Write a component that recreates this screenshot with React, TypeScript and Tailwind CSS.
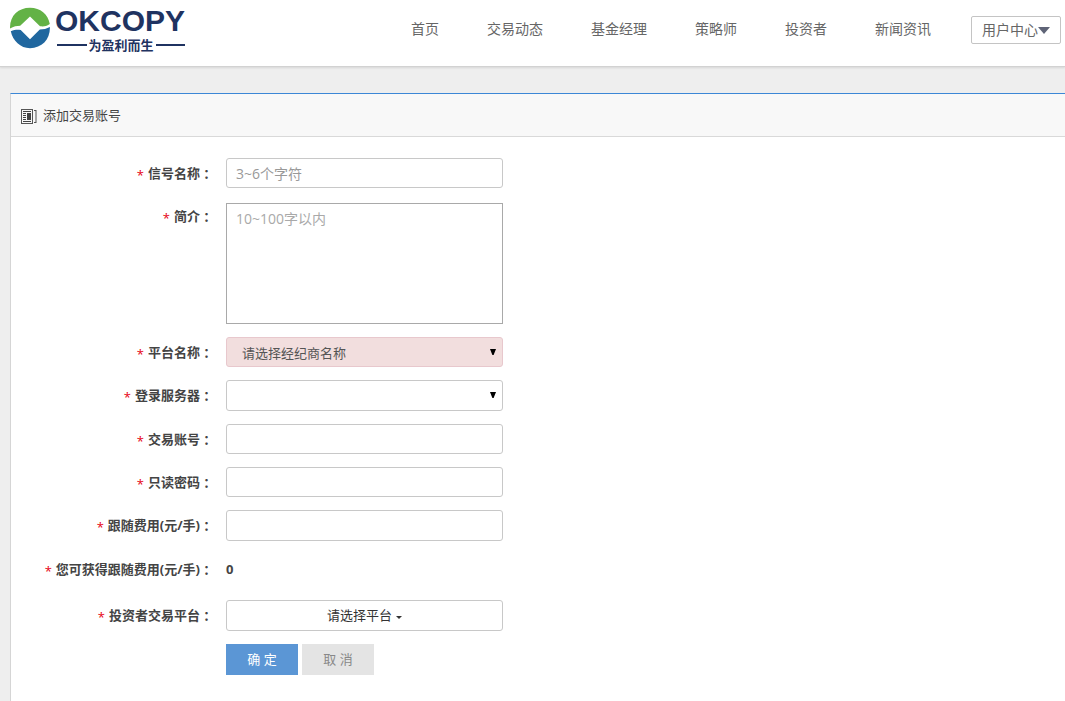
import React, { useState } from 'react';

const navItems = ['首页', '交易动态', '基金经理', '策略师', '投资者', '新闻资讯'];

const inputClass =
  'block w-full px-[9px] border border-[#c8c8c8] rounded-[3px] bg-white text-sm text-[#444] placeholder:text-[#999] focus:outline-none focus:border-[#5b96d5]';

const Logo = () => (
  <a href="#" className="flex items-start gap-[5px]">
    <svg width="40" height="42" viewBox="0 0 40 42" className="mt-[7px]" aria-hidden="true">
      <path d="M0 21.500C-.3 9 8 .8 20 .8c10.500 0 18 6.500 19.800 16.200-3.800 2.300-5.800 2.700-9.800 2.300L20 9.500l-9.800 9.300C7 18.800 3.500 19.500 0 21.500z" fill="#63b246" />
      <path d="M.8 24.300c3.700-1.500 6.200-1.800 9.900-1.300L20 32.300l9.800-9.800c3.600 0 6.900-.8 10.100-2.500C40.300 32.500 32 41.200 20 41.200 10.500 41.200 2.800 34 .8 24.300z" fill="#20679f" />
    </svg>
    <span className="flex flex-col pt-[5px] text-[#1f3361]">
      <span className="font-['Liberation_Sans',sans-serif] text-[30px] leading-8 font-bold">OKCOPY</span>
      <span className="flex items-center gap-[2px] pl-[2px] text-[13px] leading-4 font-bold">
        <span className="h-[2px] flex-1 bg-[#1f3361]" />
        为盈利而生
        <span className="h-[2px] flex-1 bg-[#1f3361]" />
      </span>
    </span>
  </a>
);

const Row = ({ label, htmlFor, children }: { label?: string; htmlFor?: string; children: React.ReactNode }) => (
  <div className="flex items-start gap-[13px]">
    <div className="w-[202px] shrink-0">
      {label && (
        <label htmlFor={htmlFor} className="flex h-[30px] items-center justify-end pt-[2px] text-[13px] font-bold text-[#444]">
          <span className="mr-1 pt-1 font-normal text-[#e60012]">*</span>
          {label}
          <span className="font-['Noto_Sans_CJK_TC',sans-serif]">：</span>
        </label>
      )}
    </div>
    <div className="w-[277px]">{children}</div>
  </div>
);

const SelectArrow = () => (
  <svg width="6" height="6" viewBox="0 0 6 6" className="pointer-events-none absolute right-[7px] top-3" aria-hidden="true">
    <path d="M0 0h6L3.600 6H2.400z" fill="#000" />
  </svg>
);

const App = () => {
  const [formData, setFormData] = useState({
    name: '',
    intro: '',
    broker: '',
    server: '',
    account: '',
    password: '',
    fee: ''
  });

  const handleChange = (e: React.ChangeEvent<HTMLInputElement | HTMLSelectElement | HTMLTextAreaElement>) => {
    setFormData({
      ...formData,
      [e.target.name]: e.target.value
    });
  };

  return (
    <div className="min-h-screen flex flex-col overflow-x-hidden bg-[#eee] font-['Open_Sans','Noto_Sans_CJK_SC',sans-serif]">
      {/* Header */}
      <header className="flex h-[67px] shrink-0 items-start justify-between border-b border-[#d2d2d2] bg-white pl-[10px] pr-1 shadow-[0_1px_2px_rgba(0,0,0,0.1)]">
        <Logo />
        <div className="flex items-start gap-10 pt-4">
          <nav className="flex gap-12 text-sm text-[#666]">
            {navItems.map((item) => (
              <a key={item} href="#" className="leading-[26px] hover:text-[#5b96d5]">
                {item}
              </a>
            ))}
          </nav>
          <button type="button" className="flex h-7 w-[90px] items-center justify-center rounded-[2px] border border-[#c4c4c4] text-sm text-[#666]">
            用户中心
            <svg width="12" height="7" viewBox="0 0 12 7" aria-hidden="true">
              <path d="M0 0h12L6 7z" fill="#5f6477" />
            </svg>
          </button>
        </div>
      </header>

      {/* Form panel */}
      <main className="mt-[26px] ml-[10px] flex-1 border-l border-t border-l-[#d5d5d5] border-t-[#3c87d6] bg-white pb-[26px]">
        <div className="flex h-[43px] items-center gap-[6px] border-b border-[#d9d9d9] bg-[#f8f8f8] pt-[2px] pl-[10px]">
          <svg width="16" height="15" viewBox="0 0 16 15" aria-hidden="true">
            <path d="M0 0h12v1H1v13h11v1H0zM11 1h1v13h-1zM13 1h2v1h-2zM14.500 1h1v13h-1zM13 13h2v1h-2z" fill="#555" />
            <path d="M2 2h8v1H2zM2 4h3v1H2zM2 6h3v1H2zM2 8h3v1H2zM2 10h3v1H2zM2 12h8v1H2zM6 4h4v7H6z" fill="#444" />
          </svg>
          <h1 className="text-[13px] text-[#444]">添加交易账号</h1>
        </div>

        <form className="pt-[21px]" onSubmit={(e) => e.preventDefault()}>
          <div className="flex flex-col gap-[13px]">
            <Row label="信号名称" htmlFor="name">
              <input id="name" name="name" value={formData.name} onChange={handleChange} placeholder="3~6个字符" className={`${inputClass} h-[30px]`} />
            </Row>
            <Row label="简介" htmlFor="intro">
              <textarea
                id="intro"
                name="intro"
                value={formData.intro}
                onChange={handleChange}
                placeholder="10~100字以内"
                className="mt-[2px] block h-[121px] w-full resize-none border border-[#a9a9a9] bg-white px-[9px] py-[5px] text-sm text-[#444] placeholder:text-[#a9a9a9] focus:outline-none"
              />
            </Row>
            <Row label="平台名称" htmlFor="broker">
              <div className="relative">
                <select
                  id="broker"
                  name="broker"
                  value={formData.broker}
                  onChange={handleChange}
                  className="block h-[30px] w-full appearance-none rounded-[3px] border border-[#e8c8cd] bg-[#f2dede] px-[15px] pt-1 text-[13px] text-[#555]"
                >
                  <option value="">请选择经纪商名称</option>
                </select>
                <SelectArrow />
              </div>
            </Row>
            <Row label="登录服务器" htmlFor="server">
              <div className="relative">
                <select
                  id="server"
                  name="server"
                  value={formData.server}
                  onChange={handleChange}
                  className={`${inputClass} h-[31px] appearance-none`}
                >
                  <option value=""></option>
                </select>
                <SelectArrow />
              </div>
            </Row>
            <Row label="交易账号" htmlFor="account">
              <input id="account" name="account" value={formData.account} onChange={handleChange} className={`${inputClass} h-[30px]`} />
            </Row>
            <Row label="只读密码" htmlFor="password">
              <input id="password" name="password" type="password" value={formData.password} onChange={handleChange} className={`${inputClass} h-[30px]`} />
            </Row>
            <Row label="跟随费用(元/手)" htmlFor="fee">
              <input id="fee" name="fee" value={formData.fee} onChange={handleChange} className={`${inputClass} h-[31px]`} />
            </Row>
            <Row label="您可获得跟随费用(元/手)" htmlFor="income">
              <output id="income" className="block h-[33px] text-[13px] leading-[30px] font-bold text-[#444]">
                0
              </output>
            </Row>
            <Row label="投资者交易平台" htmlFor="platform">
              <button id="platform" type="button" className="flex h-[31px] w-full items-center justify-center gap-1 rounded-[3px] border border-[#c8c8c8] bg-white text-[13px] text-[#333]">
                请选择平台
                <svg width="6" height="3" viewBox="0 0 6 3" className="mt-[3px]" aria-hidden="true">
                  <path d="M0 0h6L3 3z" fill="#333" />
                </svg>
              </button>
            </Row>
            <Row>
              <div className="flex gap-1 text-[13px]">
                <button type="submit" className="h-[31px] w-[72px] bg-[#5b96d5] text-white">
                  确 定
                </button>
                <button type="button" className="h-[31px] w-[72px] bg-[#e4e4e4] text-[#888]">
                  取 消
                </button>
              </div>
            </Row>
          </div>
        </form>
      </main>
    </div>
  );
};

export default App;
